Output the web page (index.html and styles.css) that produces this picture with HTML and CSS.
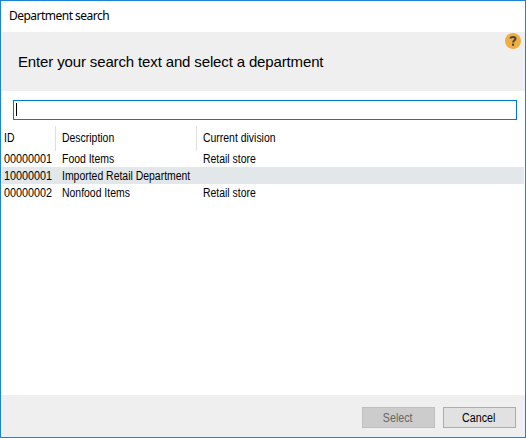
FILE: index.html
```html
<!DOCTYPE html>
<html lang="en">
<head>
<meta charset="utf-8">
<title>Department search</title>
<link rel="stylesheet" href="styles.css">
</head>
<body>
<main class="dialog">
  <div class="titlebar"><span class="title">Department search</span></div>
  <header class="banner">
    <h1>Enter your search text and select a department</h1>
    <svg class="help" width="16" height="16" viewBox="0 0 16 16" role="img" aria-label="Help">
      <circle cx="8" cy="8" r="8" fill="#f0ad42"/>
      <path d="M5.3 5.6C5.6 4.4 6.6 3.9 8 3.9C9.6 3.9 10.5 4.6 10.5 5.7C10.5 7.4 8.1 7.2 8.1 9.6" fill="none" stroke="#444" stroke-width="2"/>
      <rect x="7" y="10.6" width="2.1" height="2.1" fill="#444"/>
    </svg>
  </header>
  <div class="search"><span class="caret"></span></div>
  <section class="grid">
    <div class="row head"><div><span>ID</span></div><div><span>Description</span></div><div><span>Current division</span></div></div>
    <div class="row"><div><span class="id">00000001</span></div><div><span>Food Items</span></div><div><span>Retail store</span></div></div>
    <div class="row selected"><div><span class="id">10000001</span></div><div><span>Imported Retail Department</span></div><div></div></div>
    <div class="row"><div><span class="id">00000002</span></div><div><span>Nonfood Items</span></div><div><span>Retail store</span></div></div>
  </section>
  <footer class="actions">
    <button class="select" disabled><span>Select</span></button>
    <button class="cancel"><span>Cancel</span></button>
  </footer>
</main>
</body>
</html>
```
FILE: styles.css
```css
* { box-sizing: border-box; }
body { margin: 0; font-family: "Liberation Sans", Arial, sans-serif; color: #000; }
.dialog {
  width: 526px; height: 438px;
  display: flex; flex-direction: column;
  border: 1px solid #1883d7; background: #fff;
}
.titlebar { height: 31px; padding: 7px 0 0 8px; font: 12px/16px "Noto Sans", sans-serif; letter-spacing: -0.52px; }
.banner {
  height: 59px; padding: 1px 4px 0 17px; background: #efefef;
  display: flex; justify-content: space-between; align-items: flex-start;
}
.banner h1 { margin: 19px 0 0; font-size: 15px; line-height: 20px; font-weight: 400; letter-spacing: -0.14px; }
.help { display: block; }
.search { height: 20px; margin: 9px 8px 0 12px; padding: 2px; border: 1px solid #0078d7; background: #fff; }
.caret { display: block; width: 1px; height: 13px; background: #000; }
.grid { flex: 1; margin: 6px 1px 0; font-size: 12px; }
.row { display: grid; grid-template-columns: 53px 141px 1fr; height: 17px; line-height: 19px; white-space: nowrap; }
.row div { padding-left: 7px; }
.row div:first-child { padding-left: 2px; }
/* Condensed cell text */
.row span { display: inline-block; transform: scaleX(0.87); transform-origin: left; }
.row .id { transform: scaleX(0.9); }
.head { height: 24px; line-height: 25px; }
.head div { border-left: 1px solid #e0e0e0; padding-left: 6px; }
.head div:first-child { border: 0; }
.selected { background: #e2e7e9; }
.actions { height: 42px; padding: 12px 9px 0 0; display: flex; justify-content: flex-end; gap: 8px; background: #efefef; }
.actions button {
  width: 73px; height: 21px; padding: 0 2px 0 0;
  border: 1px solid #adadad; background: #e1e1e1;
  font: 12px/20px "Liberation Sans", Arial, sans-serif; color: #000;
}
.actions button span { display: inline-block; transform: scaleX(0.89); }
.actions .select { border-color: #bfbfbf; background: #ccc; color: #666; }
```
